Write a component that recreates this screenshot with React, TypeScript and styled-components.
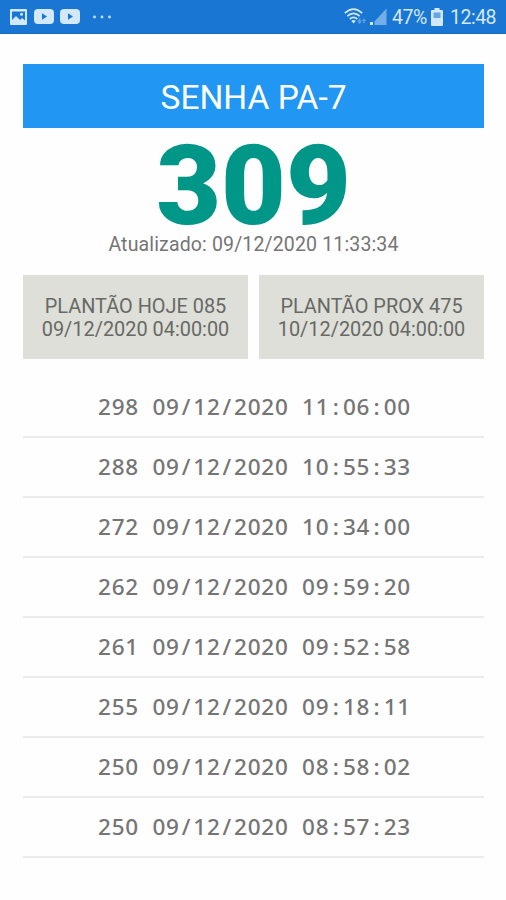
import React from "react";
import styled, { createGlobalStyle } from "styled-components";

const GlobalStyle = createGlobalStyle`
  body {
    margin: 0;
    background: #fefefe;
    font-family: Roboto, sans-serif;
  }
`;

const Screen = styled.div`
  width: 506px;
  height: 900px;
  overflow: hidden;
  background: #fefefe;
`;

const StatusBar = styled.header`
  display: flex;
  align-items: center;
  justify-content: space-between;
  box-sizing: border-box;
  height: 34px;
  padding: 0 10px 0 10px;
  background: #1976d2;
  border-bottom: 1px solid #176bc4;
  color: #d3e8fb;
`;

const StatusGroup = styled.div`
  display: flex;
  align-items: center;
`;

const StatusIcon = styled.svg<{ $gap?: number }>`
  display: block;
  flex: none;
  margin-right: ${(p) => p.$gap ?? 0}px;
`;

const StatusText = styled.span<{ $width: number; $gap?: number }>`
  width: ${(p) => p.$width}px;
  margin-right: ${(p) => p.$gap ?? 0}px;
  font-size: 19.5px;
  line-height: 34px;
  padding-top: 3px;
  white-space: nowrap;
  letter-spacing: -0.5px;
`;

const Content = styled.main`
  display: flex;
  flex-direction: column;
  padding: 30px 22px 0 23px;
`;

const Title = styled.h1`
  margin: 0;
  height: 64px;
  line-height: 67px;
  background: #2196f3;
  color: #fff;
  font-size: 33.5px;
  font-weight: 400;
  text-align: center;
`;

const Ticket = styled.div`
  height: 104px;
  line-height: 116px;
  color: #009688;
  font-size: 112px;
  font-weight: 900;
  text-align: center;
`;

const Updated = styled.div`
  height: 24px;
  line-height: 26px;
  color: #757575;
  font-size: 19.5px;
  letter-spacing: 0.15px;
  text-align: center;
`;

const Shifts = styled.section`
  display: grid;
  grid-template-columns: 1fr 1fr;
  gap: 11px;
  margin-top: 19px;
`;

const Shift = styled.div`
  box-sizing: border-box;
  height: 84px;
  padding-top: 20px;
  background: #dddfd8;
  color: #686965;
  font-size: 19.9px;
  line-height: 23px;
  text-align: center;
  white-space: nowrap;
`;

const History = styled.ul`
  margin: 19px 0 0;
  padding: 0;
  list-style: none;
`;

const Entry = styled.li`
  display: flex;
  justify-content: center;
  gap: 13.6px;
  box-sizing: border-box;
  height: 60px;
  padding-left: 2px;
  border-bottom: 2px solid #ebebeb;
  color: #757575;
  font-family: "Noto Sans", sans-serif;
  font-size: 22.5px;
  font-weight: 500;
  line-height: 57px;
`;

const Digits = styled.span`
  letter-spacing: 0.73px;
`;

const Separator = styled.span`
  display: inline-block;
  width: 13.6px;
  text-align: center;
`;

const shifts = [
  { label: "PLANTÃO HOJE 085", time: "09/12/2020 04:00:00" },
  { label: "PLANTÃO PROX 475", time: "10/12/2020 04:00:00" },
];

const entries = [
  ["298", "09/12/2020", "11:06:00"],
  ["288", "09/12/2020", "10:55:33"],
  ["272", "09/12/2020", "10:34:00"],
  ["262", "09/12/2020", "09:59:20"],
  ["261", "09/12/2020", "09:52:58"],
  ["255", "09/12/2020", "09:18:11"],
  ["250", "09/12/2020", "08:58:02"],
  ["250", "09/12/2020", "08:57:23"],
];

/* Keeps separators on the same pitch as the digits. */
const Tabular = ({ text }: { text: string }) => (
  <Digits>
    {text
      .split(/([/:])/)
      .map((part, i) => (i % 2 ? <Separator key={i}>{part}</Separator> : part))}
  </Digits>
);

const PictureIcon = () => (
  <StatusIcon $gap={7} width="17" height="16" viewBox="0 0 17 16">
    <path
      fill="#d3e8fb"
      fillRule="evenodd"
      d="M1 0h15a1 1 0 0 1 1 1v14a1 1 0 0 1-1 1H1a1 1 0 0 1-1-1V1a1 1 0 0 1 1-1zM2 2.5V11l4-4 4 4 2-2 3 2.5v-9z"
    />
    <circle cx="11.5" cy="5.2" r="1.5" fill="#d3e8fb" />
  </StatusIcon>
);

const VideoIcon = ({ gap }: { gap: number }) => (
  <StatusIcon $gap={gap} width="20" height="15" viewBox="0 0 20 15">
    <rect width="20" height="15" rx="4" fill="#d3e8fb" />
    <path d="M8 4.3v6.4l5-3.2z" fill="#1976d2" />
  </StatusIcon>
);

const MoreIcon = () => (
  <StatusIcon width="18" height="4" viewBox="0 0 18 4" fill="#c4e0fa">
    <circle cx="1.5" cy="2" r="1.4" />
    <circle cx="9" cy="2" r="1.4" />
    <circle cx="16.5" cy="2" r="1.4" />
  </StatusIcon>
);

const WifiIcon = () => (
  <StatusIcon $gap={3} width="23" height="18" viewBox="0 0 23 18">
    <g fill="none" stroke="#d3e8fb" strokeWidth="1.7">
      <path d="M.8 5.2Q9.5-2.8 18.2 5.2" />
      <path d="M3.3 8.2Q9.5 2.6 15.7 8.2" />
      <path d="M5.8 11Q9.5 7.8 13.2 11" />
    </g>
    <path d="M7.3 13Q9.5 11.2 11.7 13L9.5 15.6z" fill="#d3e8fb" />
    <path
      d="M13 12.5h1.5v-2h2v2H18l-2.5 4zM18 13l2-3 2 3h-1.2v2h-1.6v-2z"
      fill="#5b9fe1"
    />
  </StatusIcon>
);

const SignalIcon = () => (
  <StatusIcon $gap={5} width="17" height="17" viewBox="0 0 17 17">
    <rect y="14" width="3" height="3" fill="#d3e8fb" />
    <path d="M16.5.5V17H4.5v-3.5z" fill="#73aee8" />
  </StatusIcon>
);

const BatteryIcon = () => (
  <StatusIcon $gap={7} width="12" height="18" viewBox="0 0 12 18">
    <path
      d="M3.5 0h5v2H11a1 1 0 0 1 1 1v14a1 1 0 0 1-1 1H1a1 1 0 0 1-1-1V3a1 1 0 0 1 1-1h2.5z"
      fill="#d3e8fb"
    />
    <path d="M2.5 4.5h7V10h-7z" fill="#64a5e5" />
  </StatusIcon>
);

export default function App() {
  return (
    <Screen>
      <GlobalStyle />
      <StatusBar>
        <StatusGroup>
          <PictureIcon />
          <VideoIcon gap={6} />
          <VideoIcon gap={13} />
          <MoreIcon />
        </StatusGroup>
        <StatusGroup>
          <WifiIcon />
          <SignalIcon />
          <StatusText $width={33} $gap={6}>47%</StatusText>
          <BatteryIcon />
          <StatusText $width={46}>12:48</StatusText>
        </StatusGroup>
      </StatusBar>
      <Content>
        <Title>SENHA PA-7</Title>
        <Ticket>309</Ticket>
        <Updated>Atualizado: 09/12/2020 11:33:34</Updated>
        <Shifts>
          {shifts.map((s) => (
            <Shift key={s.label}>
              {s.label}
              <br />
              {s.time}
            </Shift>
          ))}
        </Shifts>
        <History>
          {entries.map((parts) => (
            <Entry key={parts.join()}>
              {parts.map((text, i) => (
                <Tabular key={i} text={text} />
              ))}
            </Entry>
          ))}
        </History>
      </Content>
    </Screen>
  );
}
